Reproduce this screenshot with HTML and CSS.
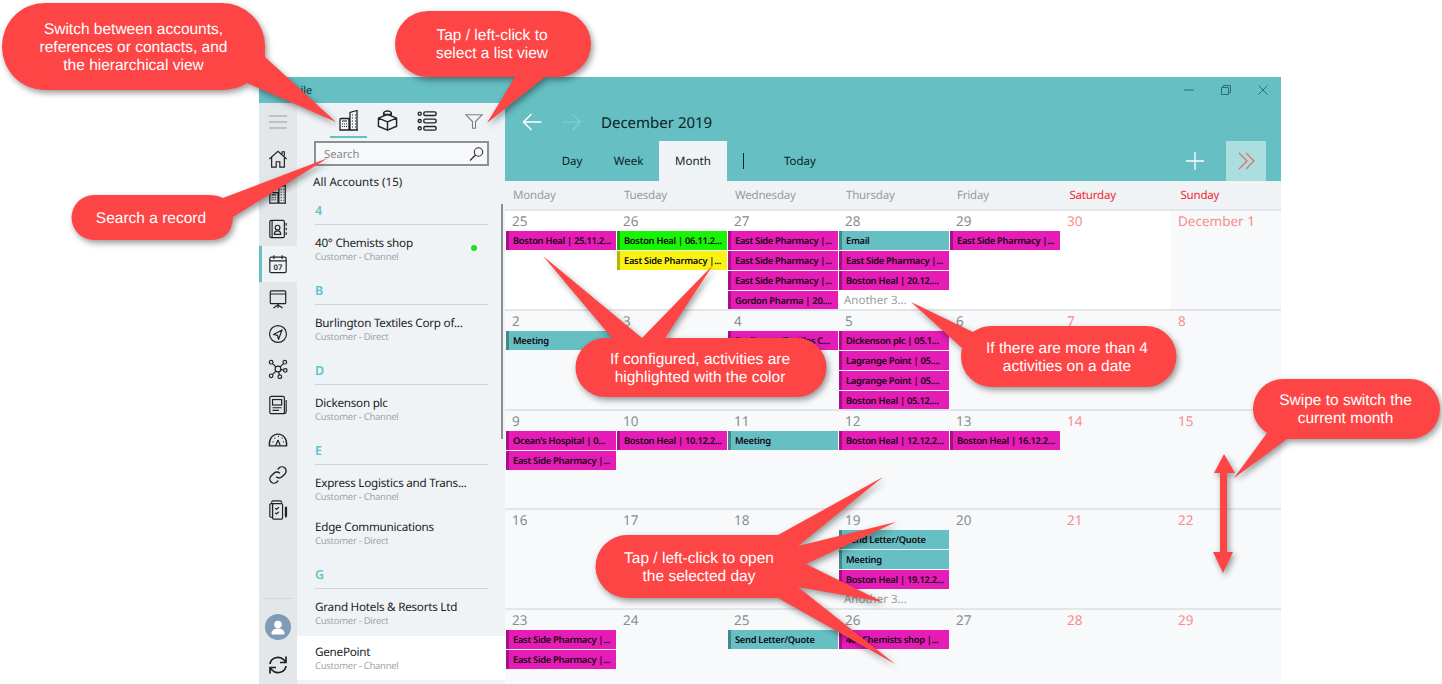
FILE: index.html
```html
<html lang="en">
<head>
    <meta charset="UTF-8">
    <title>Calendar help</title>
    <link rel="stylesheet" href="styles.css">
</head>
<body>
    <!-- shared icons -->
    <svg class="icon-defs" width="0" height="0">
        <symbol id="i-building" viewBox="0 0 22 22">
            <path d="M2 21V10.500a1 1 0 0 1 1-1h8V21zM2 21h18M12 21V3.500l7-2V21z" fill="none" stroke="currentColor" stroke-width="1.300"/>
            <path d="M4 12h5M4 15h1M6 15h1M8 15h1M4 17.500h1M6 17.500h1M8 17.500h1M14 6h1M17 6h1M14 9h1M17 9h1M14 12h1M17 12h1M14 15h1M17 15h1M14 18h1M17 18h1" fill="none" stroke="currentColor" stroke-width="1.200"/>
        </symbol>
    </svg>

    <div class="window">
        <div class="titlebar">
            <span class="app-title">Mobile</span>
            <div class="win-controls">
                <span class="win-btn"><svg width="10" height="10" viewBox="0 0 10 10"><path d="M0 5h10" stroke="currentColor" stroke-width="1"/></svg></span>
                <span class="win-btn"><svg width="10" height="10" viewBox="0 0 10 10"><path d="M.5 2.500h7v7h-7zM2.500 2.500V.5h7v7h-2" fill="none" stroke="currentColor"/></svg></span>
                <span class="win-btn"><svg width="10" height="10" viewBox="0 0 10 10"><path d="M.5.5l9 9M9.500.5l-9 9" fill="none" stroke="currentColor"/></svg></span>
            </div>
        </div>

        <div class="content">
            <nav class="rail">
                <div class="rail-burger">
                    <svg width="18" height="14" viewBox="0 0 18 14"><path d="M0 1h18M0 7h18M0 13h18" stroke="#9a9ea1" stroke-width="1.200"/></svg>
                </div>
                <a class="rail-item"><svg viewBox="0 0 22 22"><path d="M1.500 11L11 2.500l9.500 8.500M4 9v11h5v-6h4v6h5V9M15.500 5.500V3h2.500v4.500" fill="none" stroke="currentColor" stroke-width="1.300"/></svg></a>
                <a class="rail-item"><svg><use href="#i-building"/></svg></a>
                <a class="rail-item"><svg viewBox="0 0 22 22"><rect x="2" y="1.500" width="16" height="19" rx="1.500" fill="none" stroke="currentColor" stroke-width="1.300"/><path d="M4.500 1.500v19M20 4.500v3M20 9.500v3M20 14.500v3M7 17c0-3 1.500-4 3.500-4s3.500 1 3.500 4z" fill="none" stroke="currentColor" stroke-width="1.300"/><circle cx="10.500" cy="9.500" r="2.600" fill="none" stroke="currentColor" stroke-width="1.300"/></svg></a>
                <a class="rail-item active"><svg viewBox="0 0 22 22"><rect x="2" y="3.500" width="18" height="17" rx="1.500" fill="none" stroke="currentColor" stroke-width="1.300"/><path d="M2 7.500h18M6.500 1.500v4M15.500 1.500v4" fill="none" stroke="currentColor" stroke-width="1.300"/><text x="11" y="17.500" class="cal-num">07</text></svg></a>
                <a class="rail-item"><svg viewBox="0 0 22 22"><rect x="2.500" y="2" width="17" height="14" rx="1" fill="none" stroke="currentColor" stroke-width="1.300"/><path d="M2.500 5.500h17M11 16v2.500M6 21l5-3.500 5 3.500M11 18v3" fill="none" stroke="currentColor" stroke-width="1.300"/></svg></a>
                <a class="rail-item"><svg viewBox="0 0 22 22"><circle cx="11" cy="11" r="9.300" fill="none" stroke="currentColor" stroke-width="1.300"/><path d="M15.500 6.500L6 11.500l4.500 1 1 4.500z" fill="none" stroke="currentColor" stroke-width="1.300" stroke-linejoin="round"/></svg></a>
                <a class="rail-item"><svg viewBox="0 0 22 22"><g fill="none" stroke="currentColor" stroke-width="1.300"><circle cx="11" cy="11" r="3.200"/><circle cx="3.500" cy="3.500" r="2"/><circle cx="18.500" cy="3.500" r="2"/><circle cx="19" cy="12.500" r="2"/><circle cx="3.500" cy="18.500" r="2"/><circle cx="13" cy="19.500" r="2"/><path d="M5 5l3.700 3.700M17 5l-3.700 3.700M17 12.200l-3-.6M5 17l3.700-3.700M12.600 17.500l-.9-3.300"/></g></svg></a>
                <a class="rail-item"><svg viewBox="0 0 22 22"><g fill="none" stroke="currentColor" stroke-width="1.300"><path d="M18 20.500H3.500A1.500 1.500 0 0 1 2 19V3a1.500 1.500 0 0 1 1.500-1.500H16.500A1.500 1.500 0 0 1 18 3v17.500a2 2 0 0 0 2-2V5.500"/><rect x="5" y="5" width="10" height="6"/><path d="M5 14h10M5 17h7"/></g></svg></a>
                <a class="rail-item"><svg viewBox="0 0 22 22"><path d="M1.500 17.500C.8 10 5 4.500 11 4.500s10.200 5.500 9.500 13z" fill="none" stroke="currentColor" stroke-width="1.500" stroke-linejoin="round"/><path d="M11 11l-2.500 6M11 11l2.500 6" stroke="currentColor" stroke-width="1.300"/><path d="M5 13h1M7 9h1M11 7h1M15 9h1M16.500 13h1" stroke="currentColor" stroke-width="1.500"/></svg></a>
                <a class="rail-item"><svg viewBox="0 0 22 22"><path d="M9 13a4.500 4.500 0 0 0 6.400 0l3.200-3.200a4.500 4.500 0 0 0-6.400-6.400l-1.500 1.500M13 9a4.500 4.500 0 0 0-6.400 0l-3.200 3.200a4.500 4.500 0 0 0 6.400 6.400l1.500-1.500" fill="none" stroke="currentColor" stroke-width="1.500"/></svg></a>
                <a class="rail-item"><svg viewBox="0 0 22 22"><g fill="none" stroke="currentColor" stroke-width="1.300"><path d="M4 3V2.500A1.500 1.500 0 0 1 5.500 1h8A1.500 1.500 0 0 1 15 2.500V3M2 5.500A1.500 1.500 0 0 1 3.500 4H5v15H3.500A1.500 1.500 0 0 1 2 17.500z"/><rect x="5" y="4" width="11" height="17" rx="1.200"/><path d="M8 9l1.300 1.300L12 8M8 14l1.300 1.300L12 13"/></g><path d="M18.500 7.500h2.500v10l-1.250 2.500-1.250-2.500z" fill="currentColor"/></svg></a>
                <div class="rail-bottom">
                    <div class="avatar"><svg width="26" height="26" viewBox="0 0 26 26"><circle cx="13" cy="10.500" r="3.800" fill="#fff"/><path d="M6.500 19.500c0-3.500 3-5 6.500-5s6.500 1.500 6.500 5c0 .5-.5 1-1 1h-11c-.5 0-1-.5-1-1z" fill="#fff"/></svg></div>
                    <div class="sync"><svg width="20" height="20" viewBox="0 0 20 20"><g fill="none" stroke="#1d1d1d" stroke-width="1.700"><path d="M2 9a8 7.500 0 0 1 14-4l1.500 2M18 11a8 7.500 0 0 1-14 4l-1.500-2"/><path d="M18 1.500v6h-6M2 18.500v-6h6"/></g></svg></div>
                </div>
            </nav>

            <aside class="list-pane">
                <div class="view-tabs">
                    <span class="view-tab selected"><svg width="22" height="22"><use href="#i-building"/></svg></span>
                    <span class="view-tab"><svg width="21" height="21" viewBox="0 0 22 22"><g fill="none" stroke="currentColor" stroke-width="1.500" stroke-linejoin="round"><path d="M11 4.500L20.500 8.500v8.500L11 21 1.500 17V8.500zM1.500 8.500L11 12.500l9.500-4M11 12.500V21"/><path d="M7 6V3c0-1 2-2 4-2s4 1 4 2v3M7 3c0 1 2 2 4 2s4-1 4-2"/></g></svg></span>
                    <span class="view-tab"><svg width="20" height="20" viewBox="0 0 22 22"><g fill="none" stroke="currentColor" stroke-width="1.500"><circle cx="3" cy="3" r="1.700"/><circle cx="3" cy="11" r="1.700"/><circle cx="3" cy="19" r="1.700"/><rect x="7.500" y="1" width="13.500" height="4" rx="1.500"/><rect x="7.500" y="9" width="13.500" height="4" rx="1.500"/><rect x="7.500" y="17" width="13.500" height="4" rx="1.500"/></g></svg></span>
                    <span class="view-filter"><svg width="18" height="15" viewBox="0 0 18 15"><path d="M.8.7h16.400L10.500 7.500v6.800h-3V7.500z" fill="none" stroke="#7d8184" stroke-width="1.100"/></svg></span>
                </div>
                <div class="search-box">
                    <span>Search</span>
                    <svg width="15" height="14" viewBox="0 0 15 14"><circle cx="9.500" cy="5" r="4.200" fill="none" stroke="#2c2c2c" stroke-width="1.100"/><path d="M6.500 8L1 13.500" stroke="#2c2c2c" stroke-width="1.300"/></svg>
                </div>
                <div class="list-title">All Accounts (15)</div>

                <div class="group-label">4</div>
                <div class="account">
                    <div><div class="account-name">40° Chemists shop</div><div class="account-type">Customer - Channel</div></div>
                    <i class="online-dot"></i>
                </div>
                <div class="group-label">B</div>
                <div class="account"><div><div class="account-name">Burlington Textiles Corp of...</div><div class="account-type">Customer - Direct</div></div></div>
                <div class="group-label">D</div>
                <div class="account"><div><div class="account-name">Dickenson plc</div><div class="account-type">Customer - Channel</div></div></div>
                <div class="group-label">E</div>
                <div class="account tight"><div><div class="account-name">Express Logistics and Trans...</div><div class="account-type">Customer - Channel</div></div></div>
                <div class="account"><div><div class="account-name">Edge Communications</div><div class="account-type">Customer - Direct</div></div></div>
                <div class="group-label">G</div>
                <div class="account"><div><div class="account-name">Grand Hotels &amp; Resorts Ltd</div><div class="account-type">Customer - Direct</div></div></div>
                <div class="account current"><div><div class="account-name">GenePoint</div><div class="account-type">Customer - Channel</div></div></div>
                <div class="list-scrollbar"></div>
            </aside>

            <main class="calendar">
                <div class="cal-title-row">
                    <svg class="back" width="20" height="18" viewBox="0 0 20 18"><path d="M19.500 9H1.500M9.500 1l-8 8 8 8" fill="none" stroke="#fff" stroke-width="1.500"/></svg>
                    <svg class="forward" width="20" height="18" viewBox="0 0 20 18"><path d="M.5 9h18M10.500 1l8 8-8 8" fill="none" stroke="#7fcdd0" stroke-width="1.500"/></svg>
                    <span class="cal-title">December 2019</span>
                </div>
                <div class="cal-tabs">
                    <span class="cal-tab tab-day">Day</span>
                    <span class="cal-tab tab-week">Week</span>
                    <span class="cal-tab tab-month selected">Month</span>
                    <span class="tab-sep"></span>
                    <span class="cal-today">Today</span>
                    <svg class="add" width="18" height="18" viewBox="0 0 18 18"><path d="M9 0v18M0 9h18" stroke="#fff" stroke-width="1.300"/></svg>
                    <span class="pane-toggle"><svg width="17" height="18" viewBox="0 0 17 18"><path d="M1 1l8 8-8 8M8 1l8 8-8 8" fill="none" stroke="#e0706f" stroke-width="1.300"/></svg></span>
                </div>

                <div class="weekdays">
                    <span>Monday</span><span>Tuesday</span><span>Wednesday</span><span>Thursday</span><span>Friday</span>
                    <span class="weekend">Saturday</span><span class="weekend">Sunday</span>
                </div>

                <div class="month-grid">
                    <div class="day other"><div class="date">25</div><div class="event pink">Boston Heal | 25.11.2...</div></div>
                    <div class="day other"><div class="date">26</div><div class="event green">Boston Heal | 06.11.2...</div><div class="event yellow">East Side Pharmacy |...</div></div>
                    <div class="day other"><div class="date">27</div><div class="event pink">East Side Pharmacy |...</div><div class="event pink">East Side Pharmacy |...</div><div class="event pink">East Side Pharmacy |...</div><div class="event pink">Gordon Pharma | 20....</div></div>
                    <div class="day other"><div class="date">28</div><div class="event teal">Email</div><div class="event pink">East Side Pharmacy |...</div><div class="event pink">Boston Heal | 20.12....</div><div class="more">Another 3...</div></div>
                    <div class="day other"><div class="date">29</div><div class="event pink">East Side Pharmacy |...</div></div>
                    <div class="day other"><div class="date weekend">30</div></div>
                    <div class="day"><div class="date weekend">December 1</div></div>

                    <div class="day"><div class="date">2</div><div class="event teal">Meeting</div></div>
                    <div class="day"><div class="date">3</div></div>
                    <div class="day"><div class="date">4</div><div class="event pink">Burlington Textiles C...</div></div>
                    <div class="day"><div class="date">5</div><div class="event pink">Dickenson plc | 05.1...</div><div class="event pink">Lagrange Point | 05....</div><div class="event pink">Lagrange Point | 05....</div><div class="event pink">Boston Heal | 05.12....</div></div>
                    <div class="day"><div class="date">6</div></div>
                    <div class="day"><div class="date weekend">7</div></div>
                    <div class="day"><div class="date weekend">8</div></div>

                    <div class="day"><div class="date">9</div><div class="event pink">Ocean's Hospital | 0...</div><div class="event pink">East Side Pharmacy |...</div></div>
                    <div class="day"><div class="date">10</div><div class="event pink">Boston Heal | 10.12.2...</div></div>
                    <div class="day"><div class="date">11</div><div class="event teal">Meeting</div></div>
                    <div class="day"><div class="date">12</div><div class="event pink">Boston Heal | 12.12.2...</div></div>
                    <div class="day"><div class="date">13</div><div class="event pink">Boston Heal | 16.12.2...</div></div>
                    <div class="day"><div class="date weekend">14</div></div>
                    <div class="day"><div class="date weekend">15</div></div>

                    <div class="day"><div class="date">16</div></div>
                    <div class="day"><div class="date">17</div></div>
                    <div class="day"><div class="date">18</div></div>
                    <div class="day"><div class="date">19</div><div class="event teal">Send Letter/Quote</div><div class="event teal">Meeting</div><div class="event pink">Boston Heal | 19.12.2...</div><div class="more">Another 3...</div></div>
                    <div class="day"><div class="date">20</div></div>
                    <div class="day"><div class="date weekend">21</div></div>
                    <div class="day"><div class="date weekend">22</div></div>

                    <div class="day"><div class="date">23</div><div class="event pink">East Side Pharmacy |...</div><div class="event pink">East Side Pharmacy |...</div></div>
                    <div class="day"><div class="date">24</div></div>
                    <div class="day"><div class="date">25</div><div class="event teal">Send Letter/Quote</div></div>
                    <div class="day"><div class="date">26</div><div class="event pink">40° Chemists shop |...</div></div>
                    <div class="day"><div class="date">27</div></div>
                    <div class="day"><div class="date weekend">28</div></div>
                    <div class="day"><div class="date weekend">29</div></div>
                </div>
            </main>
        </div>
    </div>

    <!-- help balloons drawn over the app -->
    <svg class="callouts" width="1442" height="684" viewBox="0 0 1442 684">
        <path class="balloon" d="M45 3H222A43 43 0 0 1 265 46V57L336 122 247 83Q236 90 222 90H45A43 43 0 0 1 2 46.500A43 43 0 0 1 45 3Z"/>
        <path class="balloon" d="M428 11H558A33 33 0 0 1 558 77H545L487 123 515 77H428A33 33 0 0 1 428 11Z"/>
        <path class="balloon" d="M94 195H208Q217 195 223 198L328 158 233 217Q232 240 210 240H94A22.500 22.500 0 0 1 94 195Z"/>
        <path class="balloon" d="M605 338H612L543 256 642 338 713 265 665 338H797A29.500 29.500 0 0 1 797 397H605A29.500 29.500 0 0 1 605 338Z"/>
        <path class="balloon" d="M991 326H1146A30.500 30.500 0 0 1 1146 387H991A30.500 30.500 0 0 1 961 357Q961 351 962 348L911 302 973 332Q981 326 991 326Z"/>
        <path class="balloon" d="M1283 379H1410A30 30 0 0 1 1410 439H1287L1234 478 1267 433Q1253 423 1253 409A30 30 0 0 1 1283 379Z"/>
        <path class="balloon" d="M627 535H778L883 477 798 546 896 522 806 564 883 602 798 587 895 664 778 598H627A31.500 31.500 0 0 1 627 535Z"/>
        <path class="balloon" d="M1224 454L1235 473H1227V552H1233L1223 573 1213 552H1220V473H1214Z"/>

        <text class="balloon-text" x="133.500" y="33.500">Switch between accounts,</text>
        <text class="balloon-text" x="133.500" y="51.500">references or contacts, and</text>
        <text class="balloon-text" x="133.500" y="69.500">the hierarchical view</text>
        <text class="balloon-text" x="492" y="39.500">Tap / left-click to</text>
        <text class="balloon-text" x="492" y="57.500">select a list view</text>
        <text class="balloon-text" x="151" y="222.500">Search a record</text>
        <text class="balloon-text" x="700" y="363.500">If configured, activities are</text>
        <text class="balloon-text" x="700" y="381.500">highlighted with the color</text>
        <text class="balloon-text" x="1067" y="352.500">If there are more than 4</text>
        <text class="balloon-text" x="1067" y="370.500">activities on a date</text>
        <text class="balloon-text" x="1345.500" y="404.500">Swipe to switch the</text>
        <text class="balloon-text" x="1345.500" y="422.500">current month</text>
        <text class="balloon-text" x="699" y="562.500">Tap / left-click to open</text>
        <text class="balloon-text" x="699" y="580.500">the selected day</text>
    </svg>
</body>
</html>
```

FILE: styles.css
```css
html, body {
    margin: 0;
    padding: 0;
    height: 684px;
    overflow: hidden;
    background-color: #fff;
    font-family: "Noto Sans", Arial, sans-serif;
    text-rendering: geometricPrecision;
}
.icon-defs {
    position: absolute;
}
.window {
    margin: 77px 0 0 259px;
    width: 1022px;
    height: 607px;
    overflow: hidden;
    display: flex;
    flex-direction: column;
    background-color: #65bfc3;
}
.titlebar {
    height: 26px;
    flex: none;
    display: flex;
    align-items: center;
    justify-content: space-between;
}
.app-title {
    padding-left: 18px;
    font-size: 11px;
    color: #12393b;
}
.win-controls {
    display: flex;
    color: #2f6e71;
}
.win-btn {
    width: 37px;
    display: flex;
    justify-content: center;
}
.content {
    flex: 1;
    display: flex;
    min-height: 0;
}

/* left icon rail */
.rail {
    width: 38px;
    flex: none;
    display: flex;
    flex-direction: column;
    background-color: #e3e7ea;
}
.rail-burger {
    height: 38px;
    display: flex;
    align-items: center;
    justify-content: center;
}
.rail-item {
    height: 35.150px;
    display: flex;
    align-items: center;
    justify-content: center;
    color: #222;
    box-sizing: border-box;
}
.rail-item svg {
    width: 20px;
    height: 20px;
}
.rail-item.active {
    background-color: #eff3f6;
    border-left: 3px solid #65bfc3;
    padding-right: 3px;
}
.cal-num {
    font-size: 8.500px;
    font-weight: 600;
    text-anchor: middle;
    fill: currentColor;
}
.rail-bottom {
    margin-top: auto;
    margin-left: 4px;
    margin-right: 4px;
    padding-top: 15px;
    border-top: 1px solid #d3d7da;
    display: flex;
    flex-direction: column;
    align-items: center;
}
.avatar {
    width: 26px;
    height: 26px;
    border-radius: 50%;
    background-color: #7f9bb5;
}
.sync {
    height: 20px;
    margin: 15px 0 9px;
}

/* accounts list */
.list-pane {
    width: 208px;
    flex: none;
    position: relative;
    background-color: #eff3f6;
}
.view-tabs {
    height: 35px;
    display: flex;
    align-items: center;
    padding-left: 33px;
    box-sizing: border-box;
    color: #222;
}
.view-tab {
    width: 37px;
    height: 35px;
    margin-right: 2px;
    box-sizing: border-box;
    display: flex;
    align-items: center;
    justify-content: center;
}
.view-tab.selected {
    border-bottom: 2px solid #65bfc3;
}
.view-filter {
    margin-left: 18px;
    padding-top: 2px;
}
.search-box {
    margin: 3px 0 0 17px;
    width: 175px;
    height: 25px;
    box-sizing: border-box;
    border: 2px solid #8d9194;
    background-color: #f6f8fa;
    display: flex;
    align-items: center;
    justify-content: space-between;
    padding: 1px 3px 0 8px;
    font-size: 11.200px;
    color: #85898c;
}
.list-title {
    margin: 7px 0 0 16px;
    height: 19px;
    line-height: 20px;
    font-size: 11.600px;
    color: #1c1c1c;
}
.group-label {
    height: 35px;
    box-sizing: border-box;
    margin: 0 17px 0 18px;
    padding-top: 12px;
    line-height: 18px;
    font-size: 12.500px;
    font-weight: 600;
    color: #5ec5c9;
    border-bottom: 1px solid #cfd3d6;
    position: relative;
    top: -2px;
}
.account {
    height: 45px;
    box-sizing: border-box;
    padding: 7px 28px 0 18px;
    display: flex;
    justify-content: space-between;
    align-items: flex-start;
}
.account.tight {
    height: 44px;
}
.account.current {
    height: 44px;
    background-color: #fff;
}
.account-name {
    font-size: 11.700px;
    letter-spacing: -0.25px;
    line-height: 18px;
    color: #1c1c1c;
    white-space: nowrap;
}
.account-type {
    font-size: 9.500px;
    letter-spacing: -0.28px;
    line-height: 10px;
    color: #a2a5a8;
}
.online-dot {
    width: 6px;
    height: 6px;
    margin-top: 11px;
    border-radius: 50%;
    background-color: #1fe01f;
}
.list-scrollbar {
    position: absolute;
    left: 204px;
    top: 101px;
    width: 2px;
    height: 235px;
    background-color: #8c8f91;
}

/* calendar */
.calendar {
    flex: 1;
    min-width: 0;
    overflow: hidden;
    background-color: #f7f9fb;
}
.cal-title-row {
    height: 38px;
    display: flex;
    align-items: center;
    background-color: #65bfc3;
    padding-left: 17px;
}
.forward {
    margin-left: 20px;
}
.cal-title {
    margin: 1px 0 0 19px;
    font-size: 15px;
    color: #0d2325;
}
.cal-tabs {
    height: 40px;
    display: flex;
    align-items: center;
    background-color: #65bfc3;
    padding: 0 15px 0 41px;
    font-size: 11.500px;
    color: #0d2325;
}
.cal-tab {
    align-self: stretch;
    text-align: center;
    line-height: 41px;
}
.tab-day {
    width: 52px;
}
.tab-week {
    width: 61px;
}
.tab-month {
    width: 68px;
}
.cal-tab.selected {
    background-color: #eff3f6;
}
.tab-sep {
    width: 1px;
    height: 16px;
    margin-left: 16px;
    background-color: #0d2325;
}
.cal-today {
    margin-left: 40px;
}
.add {
    margin-left: auto;
    margin-right: 22px;
}
.pane-toggle {
    width: 40px;
    align-self: stretch;
    display: flex;
    align-items: center;
    justify-content: center;
    background-color: #aadedf;
}
.weekdays {
    height: 28px;
    padding-top: 1px;
    box-sizing: border-box;
    display: grid;
    grid-template-columns: repeat(7, 111px);
    align-items: center;
    font-size: 11.500px;
    letter-spacing: -0.2px;
    color: #989b9e;
    background-color: #eff3f6;
}
.weekdays span {
    padding-left: 8px;
}
.weekdays .weekend {
    padding-left: 9.500px;
    color: #f4262b;
}
.month-grid {
    display: grid;
    grid-template-columns: repeat(7, 111px);
    grid-auto-rows: 99.750px;
}
.day {
    border-top: 2px solid #e3e6e9;
    overflow: hidden;
}
.day.other {
    background-color: #fff;
}
.date {
    height: 20px;
    line-height: 21px;
    padding-left: 7px;
    font-size: 13.500px;
    color: #8a8c8e;
    white-space: nowrap;
}
.date.weekend {
    color: #f98c8c;
}
.event {
    width: 110px;
    height: 19px;
    margin: 0 0 1px 1px;
    box-sizing: border-box;
    padding-left: 4px;
    border-left: 3px solid;
    font-size: 9.300px;
    font-weight: 600;
    letter-spacing: -0.27px;
    line-height: 19px;
    white-space: nowrap;
    overflow: hidden;
    color: #12060f;
}
.event.pink {
    background-color: #e61cb6;
    border-left-color: #a70f86;
}
.event.teal {
    background-color: #65bfc3;
    border-left-color: #42888c;
}
.event.green {
    background-color: #18f406;
    border-left-color: #10a805;
}
.event.yellow {
    background-color: #f9f312;
    border-left-color: #b9b40c;
}
.more {
    height: 19px;
    line-height: 19px;
    padding-left: 6px;
    font-size: 11.500px;
    color: #9a9c9e;
}

/* help balloons */
.callouts {
    position: absolute;
    left: 0;
    top: 0;
    pointer-events: none;
}
.balloon {
    fill: #fe4546;
    filter: drop-shadow(2px 3px 3px rgba(0, 0, 0, 0.4));
}
.balloon-text {
    fill: #fff;
    font-family: "Liberation Sans", Arial, sans-serif;
    font-size: 15.500px;
    text-anchor: middle;
}
```
